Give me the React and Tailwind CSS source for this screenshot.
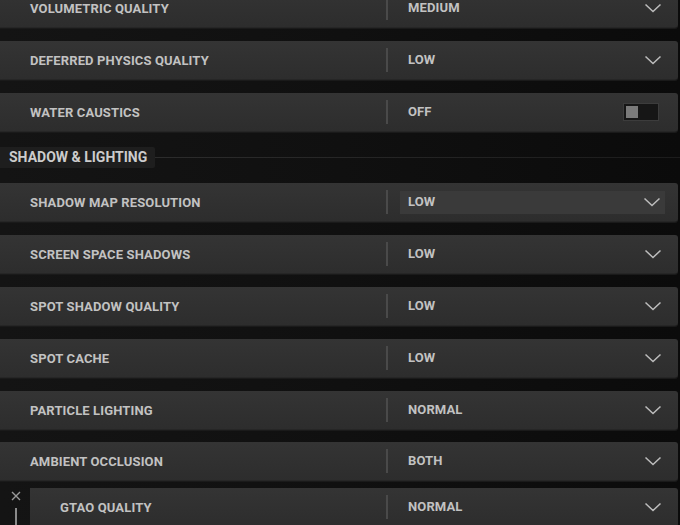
import React from "react";

const FONT = { fontFamily: "Roboto, 'Liberation Sans', sans-serif" };

function Chevron() {
  return (
    <svg width="18" height="10" viewBox="0 0 18 10" className="shrink-0">
      <path d="M1.5 1.5 L9 8.5 L16.5 1.5" fill="none" stroke="#bdbdbd" strokeWidth="1.5" />
    </svg>
  );
}

function Toggle() {
  return (
    <div className="w-[36px] h-[18px] bg-[#161616] border border-[#3c3c3c] flex items-center px-[2px]">
      <div className="w-[12px] h-[12px] bg-[#7a7a7a]" />
    </div>
  );
}

const TEXT = "text-[13px] font-bold tracking-[0.01em] text-[#c2c2c2]";

function Row({ label, value, kind = "select", active = false, indent = false, className = "" }) {
  return (
    <div
      className={
        "h-[39px] flex items-center rounded-r-[3px] bg-gradient-to-b from-[#343434] to-[#2d2d2d] border-b border-[#262626] shadow-[0_1px_0_#1a1a1a] " +
        (indent ? "ml-[30px] pl-[30px] " : "pl-[30px] ") +
        "mr-[2px] " +
        className
      }
    >
      <div className={indent ? "w-[326px] shrink-0" : "w-[356px] shrink-0"}>
        <span className={TEXT}>{label}</span>
      </div>
      <div className="w-[2px] h-[24px] bg-[#4a4a4a] shrink-0" />
      {kind === "toggle" ? (
        <div className="flex-1 flex items-center pl-[20px] pr-[19px]">
          <span className={"flex-1 " + TEXT}>{value}</span>
          <Toggle />
        </div>
      ) : (
        <div
          className={
            "flex-1 flex items-center " +
            (active
              ? "ml-[12px] mr-[13px] h-[23px] bg-[#3a3a3a] pl-[8px] pr-[4px]"
              : "pl-[20px] pr-[16px]")
          }
        >
          <span className={"flex-1 " + TEXT}>{value}</span>
          <Chevron />
        </div>
      )}
    </div>
  );
}

export default function App() {
  return (
    <div
      style={FONT}
      className="w-[680px] h-[525px] overflow-hidden bg-gradient-to-r from-[#141414] via-[#101010] to-[#0b0b0b]"
    >
      <div className="flex flex-col mt-[-11px]">
        <Row label="VOLUMETRIC QUALITY" value="MEDIUM" />
        <Row label="DEFERRED PHYSICS QUALITY" value="LOW" className="mt-[13px]" />
        <Row label="WATER CAUSTICS" value="OFF" kind="toggle" className="mt-[13px]" />

        <div className="h-[51px] flex items-center">
          <div className="h-[21px] w-[155px] bg-[#1e1e1e] pl-[9px] flex items-center rounded-r-[2px]">
            <span className="text-[14px] font-bold tracking-normal text-[#cccccc]">SHADOW &amp; LIGHTING</span>
          </div>
          <div className="flex-1 h-[1px] bg-gradient-to-r from-[#2c2c2c] to-[#1c1c1c]" />
        </div>

        <Row label="SHADOW MAP RESOLUTION" value="LOW" active />
        <Row label="SCREEN SPACE SHADOWS" value="LOW" className="mt-[13px]" />
        <Row label="SPOT SHADOW QUALITY" value="LOW" className="mt-[13px]" />
        <Row label="SPOT CACHE" value="LOW" className="mt-[13px]" />
        <Row label="PARTICLE LIGHTING" value="NORMAL" className="mt-[13px]" />
        <Row label="AMBIENT OCCLUSION" value="BOTH" className="mt-[12px]" />

        <div className="relative mt-[7px]">
          <div className="absolute left-[10px] top-[2px] flex flex-col items-center">
            <svg width="12" height="12" viewBox="0 0 12 12">
              <path d="M2 2 L10 10 M10 2 L2 10" stroke="#9a9a9a" strokeWidth="1.4" />
            </svg>
            <div className="w-[2px] h-[30px] bg-[#8a8a8a] mt-[6px]" />
          </div>
          <Row label="GTAO QUALITY" value="NORMAL" indent />
        </div>
      </div>
    </div>
  );
}
